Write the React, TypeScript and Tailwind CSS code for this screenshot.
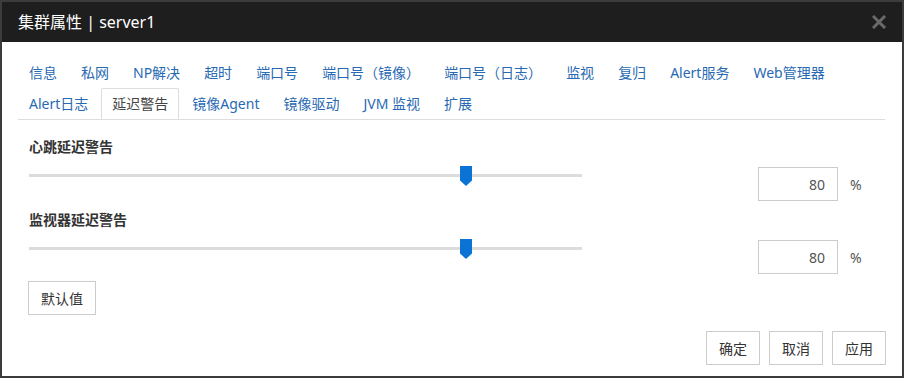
import React from "react";

const row1 = ["信息", "私网", "NP解决", "超时", "端口号", "端口号（镜像）", "端口号（日志）", "监视", "复归", "Alert服务", "Web管理器"];
const row2 = ["Alert日志", "延迟警告", "镜像Agent", "镜像驱动", "JVM 监视", "扩展"];

function Tab({ label, active }: { label: string; active?: boolean }) {
  if (active) {
    return (
      <div className="h-[31px] px-[10px] mr-[2px] flex items-center border border-[#dddddd] border-b-white bg-white text-[#444] -mb-px rounded-t-[2px]">
        {label}
      </div>
    );
  }
  return (
    <div className="h-[31px] px-[10px] mr-[2px] flex items-center text-[#2869b3] border border-transparent">
      {label}
    </div>
  );
}

function Slider({ pct }: { pct: number }) {
  return (
    <div className="relative w-[553px] h-[20px]">
      <div className="absolute left-0 right-0 top-[8px] h-[3px] bg-[#dcdcdc]" />
      <svg
        className="absolute top-0"
        style={{ left: `calc(${pct}% - 6px)` }}
        width="12"
        height="20"
        viewBox="0 0 12 20"
      >
        <path d="M0 0 H12 V14.5 L6 20 L0 14.5 Z" fill="#0b72d6" />
      </svg>
    </div>
  );
}

function SliderRow({ label, value }: { label: string; value: string }) {
  return (
    <div>
      <div className="text-[14px] leading-[18px] font-bold text-[#333]">{label}</div>
      <div className="flex items-start mt-[10px]">
        <Slider pct={79} />
        <div className="ml-[176px] mt-[1px] w-[80px] h-[34px] border border-[#cccccc] flex items-center justify-end pr-[12px] text-[14px] text-[#555]">
          {value}
        </div>
        <div className="ml-[12px] mt-[1px] h-[34px] flex items-center text-[14px] text-[#555]">%</div>
      </div>
    </div>
  );
}

function Btn({ label, w }: { label: string; w: string }) {
  return (
    <div className={`${w} h-[34px] border border-[#cccccc] flex items-center justify-center text-[14px] text-[#333] bg-white`}>
      {label}
    </div>
  );
}

export default function App() {
  return (
    <div
      className="w-[904px] h-[378px] border-2 border-[#3c3c3c] bg-white flex flex-col overflow-hidden"
      style={{ fontFamily: '"Noto Sans", "Noto Sans CJK SC", sans-serif' }}
    >
      <div className="h-[40px] bg-[#1e1e1e] flex items-center justify-between pl-[16px] pr-[16px] shrink-0">
        <div className="text-white text-[16px] leading-[20px]">集群属性 | server1</div>
        <svg width="14" height="14" viewBox="0 0 14 14">
          <path d="M2 2 L12 12 M12 2 L2 12" stroke="#6a6a6a" strokeWidth="3" strokeLinecap="square" />
        </svg>
      </div>
      <div className="pl-[16px] pr-[17px] pt-[15px]">
        <div className="border-b border-[#dddddd] text-[14px] leading-[18px]">
          <div className="flex">{row1.map((t) => <Tab key={t} label={t} />)}</div>
          <div className="flex">
            {row2.map((t) => (
              <Tab key={t} label={t} active={t === "延迟警告"} />
            ))}
          </div>
        </div>
      </div>
      <div className="pl-[27px] pt-[18px] flex flex-col gap-[10px]">
        <SliderRow label="心跳延迟警告" value="80" />
        <SliderRow label="监视器延迟警告" value="80" />
      </div>
      <div className="pl-[26px] mt-[7px]">
        <Btn label="默认值" w="w-[68px]" />
      </div>
      <div className="flex justify-end gap-[9px] pr-[16px] mt-[16px]">
        <Btn label="确定" w="w-[54px]" />
        <Btn label="取消" w="w-[54px]" />
        <Btn label="应用" w="w-[54px]" />
      </div>
    </div>
  );
}
